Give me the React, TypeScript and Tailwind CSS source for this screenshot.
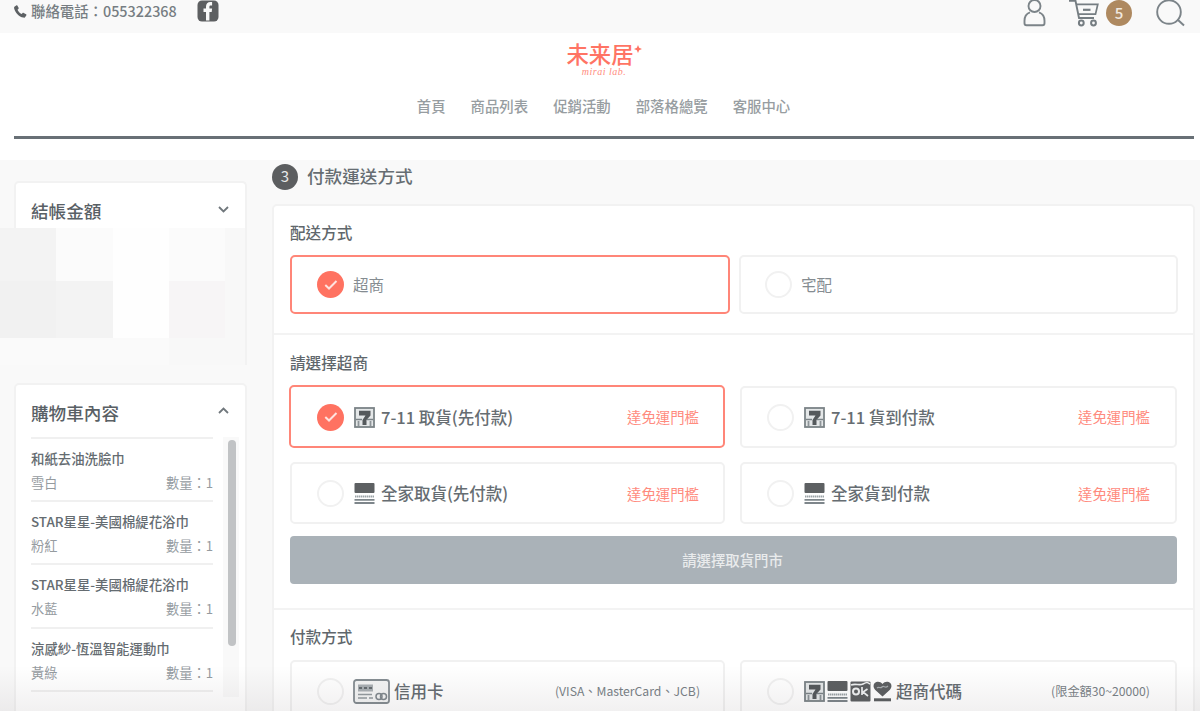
import type { ReactNode } from "react";
import clsx from "clsx";

interface CartItem {
  id: number;
  name: string;
  color: string;
  qty: number;
}

const navItems = ["首頁", "商品列表", "促銷活動", "部落格總覽", "客服中心"];

const cartItems: CartItem[] = [
  { id: 1, name: "和紙去油洗臉巾", color: "雪白", qty: 1 },
  { id: 2, name: "STAR星星-美國棉緹花浴巾", color: "粉紅", qty: 1 },
  { id: 3, name: "STAR星星-美國棉緹花浴巾", color: "水藍", qty: 1 },
  { id: 4, name: "涼感紗-恆溫智能運動巾", color: "黃綠", qty: 1 },
];

function PhoneIcon() {
  return (
    <svg className="h-[13px] w-[13px]" viewBox="0 0 13 13" fill="#5d6164">
      <path d="M.4 1.7 2.2.4c.5-.3.9-.2 1.1.2l1.3 2.2c.2.4.1.8-.2 1.1l-.9.9c.9 1.900 2.200 3.200 4.100 4.200l1-1c.3-.3.7-.3 1.100-.1l2.400 1.400c.4.2.5.7.2 1.100L11 12.200c-.4.5-1 .6-1.600.4C4.800 11.600 1.300 8 .100 3.200 0 2.600 0 2.100.400 1.700Z" />
    </svg>
  );
}

function FacebookIcon() {
  return (
    <svg className="h-[22px] w-[22px]" viewBox="0 0 22 22">
      <rect x="0.500" y="0.500" width="21" height="21" rx="4.500" fill="#5d5f61" />
      <path d="M9 20.500V12H6.500V8.400H9V6.800c0-3.100 1.600-4.800 4.400-4.800h1.700v3.500h-1.300c-1 0-1.400.5-1.400 1.400v1.500h2.700L14.700 12h-2.300v8.500Z" fill="#f9f9f9" />
    </svg>
  );
}

function UserIcon() {
  return (
    <svg className="h-[28px] w-[24px]" viewBox="0 0 24 28" fill="none" stroke="#7c8489" strokeWidth="1.900">
      <circle cx="11.500" cy="6" r="6" />
      <path d="M7 12.300C3.500 13.500 1.500 16.600 1.500 20.800v2.500c0 1.300.7 2 2 2h16c1.300 0 2-.7 2-2v-2.500c0-4.200-2-7.300-5.500-8.500" />
    </svg>
  );
}

function CartIcon() {
  return (
    <svg className="h-[28px] w-[32px]" viewBox="0 0 32 28" fill="none" stroke="#757d82" strokeWidth="1.700">
      <path d="M0 .8h6.500l3.500 17.200H25" strokeWidth="1.900" />
      <path d="M7.500 4.300h21.300l-2.300 9.900H9.300" />
      <path d="M14 9.800h7.500" strokeWidth="2.200" />
      <circle cx="12.300" cy="23" r="2.400" strokeWidth="2" />
      <circle cx="24.500" cy="23" r="2.400" strokeWidth="2" />
    </svg>
  );
}

function SearchIcon() {
  return (
    <svg className="h-[28px] w-[30px]" viewBox="0 0 30 28" fill="none" stroke="#7c8489" strokeWidth="1.900">
      <circle cx="13" cy="12" r="11.800" />
      <path d="m21.500 19.500 6.500 6" strokeWidth="2" />
    </svg>
  );
}

function SevenIcon() {
  return (
    <svg className="h-[21px] w-[21px]" viewBox="0 0 21 21">
      <rect x="1" y="1" width="19" height="19" fill="#e4e7e8" stroke="#7b8387" strokeWidth="1.800" />
      <path d="M5 3.800h11.500v4.700L12.500 13v5H8.500v-5l3-4.500H5Z" fill="#55595c" />
      <path d="M2 12.500h6M13 12.500h6" stroke="#7b8387" strokeWidth="1.500" />
      <path d="M4.500 14v5M16.500 14v5" stroke="#8d9498" strokeWidth="1.800" />
    </svg>
  );
}

function FamilyIcon() {
  return (
    <svg className="h-[21px] w-[21px]" viewBox="0 0 21 21">
      <rect x="0.500" width="20" height="10" rx="1" fill="#5d6062" />
      <path d="M1 13.500h19" stroke="#9aa2a6" strokeWidth="2.200" strokeDasharray="1.500 .5" />
      <path d="M.5 16.800h20M.5 20h20" stroke="#7e868b" strokeWidth="1.800" />
    </svg>
  );
}

function OkIcon() {
  return (
    <svg className="h-[21px] w-[21px]" viewBox="0 0 21 21">
      <rect x="0.500" y="0.500" width="20" height="20" rx="1" fill="#5d6062" />
      <circle cx="6" cy="10.500" r="3" fill="none" stroke="#eef0f1" strokeWidth="2" />
      <path d="M12 6v8M17.500 8 13 11l5 4M1 4c5-2 8 1 12-1s4-2 7 0" fill="none" stroke="#eef0f1" strokeWidth="1.700" />
    </svg>
  );
}

function HiLifeIcon() {
  return (
    <svg className="h-[21px] w-[19px]" viewBox="0 0 19 21">
      <path d="M9.500 15.500 2.300 9C.3 7-.1 4 1.700 2.100 4-.1 7.500.4 9.500 3c2-2.600 5.500-3.100 7.800-.9C19.100 4 18.700 7 16.700 9Z" fill="#5d6062" />
      <path d="M4 7c2-2 3 1 5-1s3 2 6-1" fill="none" stroke="#a9aeb1" strokeWidth="1.200" />
      <path d="M1 18.800h17" stroke="#5d6062" strokeWidth="3" />
    </svg>
  );
}

function CreditCardIcon() {
  return (
    <svg className="h-[25px] w-[37px]" viewBox="0 0 37 25" fill="none">
      <rect x="1" y="1" width="35" height="23" rx="2.500" fill="#f3f4f4" stroke="#868e93" strokeWidth="1.800" />
      <path d="M5 5.500h15v7H5Z" fill="#a9afb3" />
      <path d="M6 9h3M11 9h3M16 9h3" stroke="#656c70" strokeWidth="2" />
      <path d="M5 15.500h14M5 19h9M16 19h4" stroke="#949b9f" strokeWidth="1.700" />
      <circle cx="26" cy="17.500" r="3" stroke="#81898e" strokeWidth="1.500" />
      <circle cx="30.500" cy="17.500" r="3" stroke="#81898e" strokeWidth="1.500" />
    </svg>
  );
}

function Chevron({ up = false }: { up?: boolean }) {
  return (
    <svg className="h-[7px] w-[11px]" viewBox="0 0 11 7" fill="none" stroke="#70777c" strokeWidth="1.800">
      <path d={up ? "m1 6 4.500-4.500L10 6" : "m1 1 4.500 4.500L10 1"} />
    </svg>
  );
}

function Radio({ checked = false }: { checked?: boolean }) {
  if (!checked) {
    return <span className="h-[27px] w-[27px] shrink-0 rounded-full border-2 border-[#f1f1f1] bg-white" />;
  }

  return (
    <span className="flex h-[27px] w-[27px] shrink-0 items-center justify-center rounded-full bg-[#ff7261]">
      <svg className="h-[10px] w-[14px]" viewBox="0 0 14 10" fill="none" stroke="#ffe3df" strokeWidth="2">
        <path d="m1.300 5 3.700 3.500L12.500 1" />
      </svg>
    </span>
  );
}

interface OptionProps {
  label: string;
  icons?: ReactNode;
  note?: string;
  noteClass?: string;
  checked?: boolean;
  className?: string;
}

function Option({ label, icons, note, noteClass = "text-[14.400px] text-[#ff8b7e]", checked, className }: OptionProps) {
  return (
    <div
      className={clsx(
        "flex items-center rounded-[5px] border-2",
        checked ? "border-[#ff8678]" : "border-[#f1f1f1]",
        className
      )}
    >
      <Radio checked={checked} />
      {icons && <span className="ml-[10px] flex items-center gap-[2px]">{icons}</span>}
      <span
        className={clsx(
          "whitespace-nowrap",
          icons ? "ml-[6px] text-[16.500px] font-medium text-[#666d72]" : "ml-[9px] text-[15.500px] text-[#858c91]"
        )}
      >
        {label}
      </span>
      {note && <span className={clsx("ml-auto whitespace-nowrap", noteClass)}>{note}</span>}
    </div>
  );
}

function SectionTitle({ children }: { children: ReactNode }) {
  return <h3 className="h-6 text-[15.600px] leading-6 font-medium text-[#60676c]">{children}</h3>;
}

function Header() {
  return (
    <header className="bg-white">
      <div className="flex h-[33px] items-start justify-between bg-[#f9f9f9] pr-[14px] pl-[14px]">
        <div className="flex h-[22px] items-center">
          <PhoneIcon />
          <span className="ml-[4px] text-[14.400px] font-medium text-[#767d82]">聯絡電話：055322368</span>
          <span className="ml-[20px]">
            <FacebookIcon />
          </span>
        </div>
        <div className="flex items-start">
          <UserIcon />
          <span className="ml-[22px]">
            <CartIcon />
          </span>
          <span className="ml-[5px] flex h-[26px] w-[26px] items-center justify-center rounded-full bg-[#ae8960] text-[15px] font-medium text-[#f1e9e0]">
            5
          </span>
          <span className="ml-[24px]">
            <SearchIcon />
          </span>
        </div>
      </div>
      <div className="flex h-[127px] flex-col items-center">
        <div className="mt-[8px] flex h-[24px] items-start pl-[8px] text-[#ff7464]">
          <span className="text-[22.400px] leading-[24px] font-medium">未来居</span>
          <svg className="mt-[4px] h-[8px] w-[8px]" viewBox="0 0 7 7" fill="#ff7464">
            <path d="M3.500 0 4.500 2.500 7 3.500 4.500 4.500 3.500 7 2.500 4.500 0 3.500 2.500 2.500Z" />
          </svg>
        </div>
        <span className="mt-[2px] h-[10px] pl-[8px] font-['Liberation_Serif',serif] text-[10px] leading-[10px] tracking-[0.500px] text-[#ff8d80] italic">
          mirai lab.
        </span>
        <nav className="mt-[19px] flex h-[20px] gap-[25px] pl-[7px] text-[14.400px] leading-[20px] font-medium text-[#979da1]">
          {navItems.map((item) => (
            <a key={item}>{item}</a>
          ))}
        </nav>
        <div className="mt-[20px] mr-[6px] ml-[14px] h-[3px] self-stretch bg-[#687076]" />
      </div>
    </header>
  );
}

function Summary() {
  return (
    <div className="h-[202px]">
      <div className="ml-[14px] flex h-[47px] items-center justify-between rounded-t-[5px] border-2 border-b-0 border-[#f2f2f2] bg-white pt-[12px] pr-[16px] pl-[15px]">
        <h2 className="text-[17.600px] font-medium text-[#596065]">結帳金額</h2>
        <span className="mb-[5px]">
          <Chevron />
        </span>
      </div>
      <div className="grid h-[137px] w-[247px] grid-cols-[56px_57px_56px_56px_20px] grid-rows-[53px_57px_27px] border-r-2 border-[#f2f2f2]">
        <span className="bg-[#f3f3f3]" />
        <span className="bg-[#fbfbfb]" />
        <span className="bg-[#fefefe]" />
        <span className="bg-[#fbfbfb]" />
        <span className="bg-[#f8f8f8]" />
        <span className="bg-[#f1f1f1]" />
        <span className="bg-[#f3f3f3]" />
        <span className="bg-[#fefefe]" />
        <span className="bg-[#f7f5f6]" />
        <span className="bg-[#f8f8f8]" />
        <span className="col-span-3 bg-[#fafafa]" />
        <span className="col-span-2 bg-[#f8f8f8]" />
      </div>
    </div>
  );
}

function Cart() {
  return (
    <div className="ml-[14px] h-[340px] rounded-[5px] border-2 border-[#f2f2f2] bg-white pl-[15px]">
      <div className="flex h-[52px] items-center justify-between pt-[5px] pr-[16px]">
        <h2 className="text-[17.600px] font-medium text-[#596065]">購物車內容</h2>
        <span className="mb-[6px]">
          <Chevron up />
        </span>
      </div>
      <div className="flex">
        <ul className="w-[182px] border-t-2 border-[#f0f0f0]">
          {cartItems.map((item) => (
            <li key={item.id} className="h-[63.200px] border-b-2 border-[#f0f0f0] pt-[8px]">
              <p className="text-[13.400px] leading-[22px] font-medium whitespace-nowrap text-[#656c71]">{item.name}</p>
              <p className="flex justify-between pt-[2px] text-[13.200px] leading-[24px] text-[#959b9f]">
                <span>{item.color}</span>
                <span>數量：{item.qty}</span>
              </p>
            </li>
          ))}
        </ul>
        <div className="ml-[10px] flex h-[260px] w-[16px] justify-center bg-[#f9f9f9] pt-[3px]">
          <span className="ml-[2px] h-[206px] w-[8px] rounded-full bg-[#c1c3c5]" />
        </div>
      </div>
    </div>
  );
}

export default function App() {
  const smallNote = "text-[12.200px] text-[#7a8287]";

  return (
    <div className="relative h-[711px] w-[1200px] overflow-hidden bg-[#f9f9f9] font-['Noto_Sans_CJK_TC',sans-serif]">
      <Header />
      <main className="flex">
        <aside className="w-[247px] shrink-0 pt-[21px]">
          <Summary />
          <Cart />
        </aside>
        <div className="ml-[25px] w-[923px] shrink-0">
          <div className="flex h-[33px] items-center">
            <span className="flex h-[26px] w-[26px] items-center justify-center rounded-full bg-[#5c5e60] text-[15px] text-[#e8e8e8]">
              3
            </span>
            <h1 className="ml-[9px] text-[17.600px] font-medium text-[#666d72]">付款運送方式</h1>
          </div>
          <div className="mt-[11px] rounded-[5px] border-2 border-[#f2f2f2] bg-white">
            <section className="h-[129px] border-b-2 border-[#f3f3f3] px-[16px] pt-[14px]">
              <SectionTitle>配送方式</SectionTitle>
              <div className="mt-[11px] grid h-[59px] grid-cols-[440px_439px] gap-[9px]">
                <Option label="超商" checked className="pl-[25px]" />
                <Option label="宅配" className="pl-[24px]" />
              </div>
            </section>
            <section className="h-[275px] border-b-2 border-[#f3f3f3] px-[16px] pt-[15px]">
              <SectionTitle>請選擇超商</SectionTitle>
              <div className="mt-[12px] grid grid-cols-[435px_437px] grid-rows-[62px_62px] gap-x-[15px] gap-y-[14px]">
                <Option
                  label="7-11 取貨(先付款)"
                  note="達免運門檻"
                  icons={<SevenIcon />}
                  checked
                  className="-mt-px -ml-px pt-px pr-[24px] pl-[26px]"
                />
                <Option label="7-11 貨到付款" note="達免運門檻" icons={<SevenIcon />} className="pr-[25px] pl-[25px]" />
                <Option label="全家取貨(先付款)" note="達免運門檻" icons={<FamilyIcon />} className="pt-px pr-[24px] pl-[25px]" />
                <Option label="全家貨到付款" note="達免運門檻" icons={<FamilyIcon />} className="pt-px pr-[25px] pl-[25px]" />
              </div>
              <button className="mt-[12px] flex h-[48px] w-full items-center justify-center rounded-[4px] bg-[#aab2b8] pr-[2px] text-[14.400px] font-medium text-[#e9ebec]">
                請選擇取貨門市
              </button>
            </section>
            <section className="h-[150px] px-[16px] pt-[14px]">
              <SectionTitle>付款方式</SectionTitle>
              <div className="mt-[12px] grid h-[62px] grid-cols-[435px_437px] gap-[15px]">
                <Option
                  label="信用卡"
                  note="(VISA、MasterCard、JCB)"
                  noteClass={smallNote}
                  icons={
                    <span className="-mr-[2px] -ml-[1px]">
                      <CreditCardIcon />
                    </span>
                  }
                  className="pt-px pr-[23px] pl-[25px]"
                />
                <Option
                  label="超商代碼"
                  note="(限金額30~20000)"
                  noteClass={smallNote}
                  icons={
                    <span className="-mr-[2px] flex gap-[2px]">
                      <SevenIcon />
                      <FamilyIcon />
                      <OkIcon />
                      <HiLifeIcon />
                    </span>
                  }
                  className="pt-px pr-[25px] pl-[25px]"
                />
              </div>
            </section>
          </div>
        </div>
      </main>
      <div className="pointer-events-none absolute inset-x-0 bottom-0 h-[46px] bg-linear-to-b from-transparent to-[#1c0b12]/6" />
    </div>
  );
}
